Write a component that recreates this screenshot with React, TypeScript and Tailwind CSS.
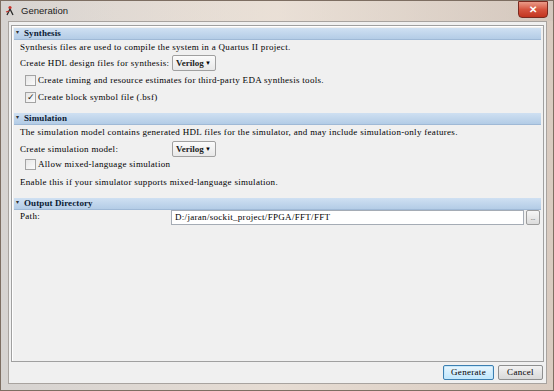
import React from 'react'

const serif = { fontFamily: '"Liberation Serif", "DejaVu Serif", serif' }

const Header = ({ title }: { title: string }) => (
  <div className="h-[12px] flex items-center bg-gradient-to-b from-[#cfe0f2] to-[#b3cce6] border-b border-[#9fb9d6]">
    <span className="text-[6px] leading-none text-[#333] ml-[2px] mt-[-4px]">▾</span>
    <span className="ml-[5px] text-[9px] font-bold tracking-[0.1px] text-[#0a1a33] leading-none">{title}</span>
  </div>
)

const Dropdown = () => (
  <div className="w-[44px] h-[16px] border border-[#a0a0a0] rounded-[2px] bg-gradient-to-b from-[#fbfbfb] to-[#e8e8e8] flex items-center pl-[3px]">
    <span className="text-[9px] font-bold leading-none text-[#222]">Verilog</span>
    <span className="ml-auto mr-[4px] text-[6px] leading-none">▼</span>
  </div>
)

const Check = ({ checked, label }: { checked?: boolean; label: string }) => (
  <div className="flex items-center h-full pl-[11px]">
    <div className="w-[11px] h-[11px] border border-[#a3a3a3] bg-gradient-to-br from-[#e6e6e6] to-[#fbfbfb] flex items-center justify-center text-[9px] leading-none text-[#222]">
      {checked ? '✓' : ''}
    </div>
    <span className="ml-[2px] text-[9px] tracking-[0.3px] leading-none">{label}</span>
  </div>
)

const Line = ({ children }: { children: React.ReactNode }) => (
  <span className="text-[9px] tracking-[0.3px] leading-none">{children}</span>
)

export default function App() {
  return (
    <div
      className="w-[554px] h-[391px] relative overflow-hidden leading-none border border-[#7d6e62] bg-gradient-to-r from-[#d6d3d1] via-[#e6dcd3] to-[#d9cbc0]"
      style={serif}
    >
      {/* title bar */}
      <div className="h-[20px] flex items-start relative">
        <div className="absolute inset-0 bg-gradient-to-r from-transparent via-[#ece2d8]/60 to-[#cfc4bb]/50" />
        <svg width="11" height="11" viewBox="0 0 11 11" className="relative ml-[4px] mt-[4px]">
          <path d="M2 10 L5 4 L8 10" stroke="#2a2a2a" strokeWidth="1.3" fill="none" />
          <circle cx="5" cy="2.5" r="1.6" fill="#c8322a" />
          <path d="M1 7 L4 6" stroke="#c8322a" strokeWidth="1.2" />
        </svg>
        <span
          className="relative ml-[5px] mt-[5px] text-[9.5px] text-[#1c1c1c]"
          style={{ fontFamily: '"Liberation Sans", Arial, sans-serif' }}
        >
          Generation
        </span>
        <div className="absolute right-[5px] top-0 w-[30px] h-[17px] rounded-b-[4px] border border-[#7a2a20] bg-gradient-to-b from-[#e99a88] via-[#d5533e] to-[#c2341f] flex items-center justify-center">
          <span className="text-white text-[10px] font-bold leading-none" style={{ fontFamily: '"Liberation Sans", sans-serif' }}>
            ✕
          </span>
        </div>
      </div>

      {/* client */}
      <div className="ml-[7px] w-[539px] h-[363px] bg-[#f0f0f0] border border-[#a8a39f] flex flex-col">
        <div className="ml-[2px] mt-[3px] w-[533px] h-[337px] border border-[#a0a0a0] shadow-[inset_1px_1px_0_#ffffff] px-[2px] pt-[2px] flex flex-col">
          <Header title="Synthesis" />
          <div className="h-[15px] flex items-center pl-[6px]">
            <Line>Synthesis files are used to compile the system in a Quartus II project.</Line>
          </div>
          <div className="h-[16px] flex items-center pl-[6px]">
            <div className="w-[152px] flex">
              <Line>Create HDL design files for synthesis:</Line>
            </div>
            <Dropdown />
          </div>
          <div className="h-[16px] mt-[1px]">
            <Check label="Create timing and resource estimates for third-party EDA synthesis tools." />
          </div>
          <div className="h-[16px] mt-[1px]">
            <Check checked label="Create block symbol file (.bsf)" />
          </div>

          <div className="mt-[8px]">
            <Header title="Simulation" />
          </div>
          <div className="h-[14px] flex items-center pl-[6px]">
            <Line>
              The simulation model contains generated HDL files for the simulator, and may include simulation-only
              features.
            </Line>
          </div>
          <div className="h-[16px] mt-[2px] flex items-center pl-[6px]">
            <div className="w-[152px] flex">
              <Line>Create simulation model:</Line>
            </div>
            <Dropdown />
          </div>
          <div className="h-[15px]">
            <Check label="Allow mixed-language simulation" />
          </div>
          <div className="h-[14px] mt-[3px] flex items-center pl-[6px]">
            <Line>Enable this if your simulator supports mixed-language simulation.</Line>
          </div>

          <div className="mt-[9px]">
            <Header title="Output Directory" />
          </div>
          <div className="h-[15px] flex items-center pl-[6px]">
            <div className="w-[151px] flex self-start mt-[2px]">
              <Line>Path:</Line>
            </div>
            <div className="w-[353px] h-[15px] bg-white border border-[#a5acb5] flex items-center pl-[3px]">
              <Line>D:/jaran/sockit_project/FPGA/FFT/FFT</Line>
            </div>
            <div className="ml-[2px] w-[14px] h-[15px] border border-[#9c9c9c] rounded-[2px] bg-gradient-to-b from-[#f6f6f6] to-[#dcdcdc] flex items-end justify-center pb-[3px]">
              <span className="text-[6px] leading-none text-[#555]">...</span>
            </div>
          </div>
        </div>

        <div className="mt-[3px] flex justify-end gap-[4px] pr-[3px]">
          <div className="w-[51px] h-[15px] rounded-[2px] border border-[#3c7fb1] bg-gradient-to-b from-[#eaf6fd] to-[#bee6fd] shadow-[inset_0_0_0_1px_#c5e8fb] flex items-center justify-center">
            <Line>Generate</Line>
          </div>
          <div className="w-[45px] h-[15px] rounded-[2px] border border-[#8e8f8f] bg-gradient-to-b from-[#f2f2f2] to-[#d9d9d9] flex items-center justify-center">
            <Line>Cancel</Line>
          </div>
        </div>
      </div>
    </div>
  )
}
